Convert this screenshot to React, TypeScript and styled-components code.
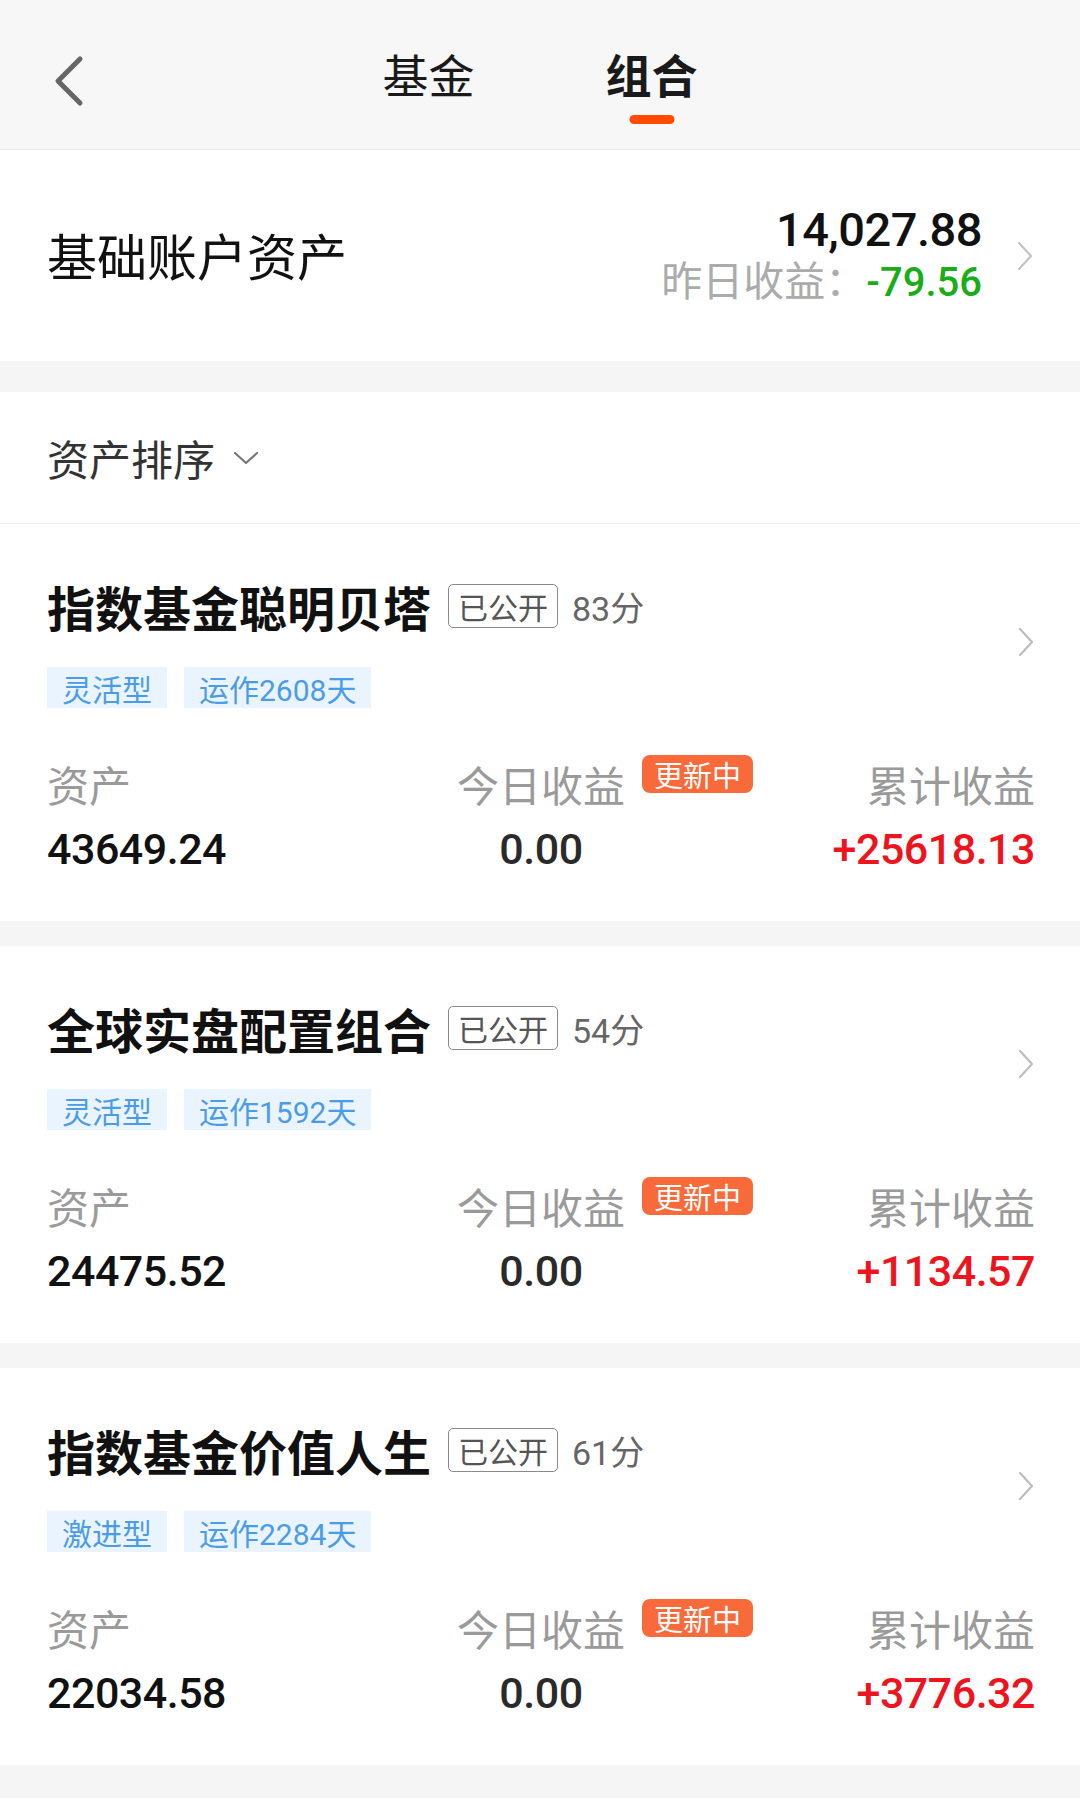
import React from 'react';
import styled, { createGlobalStyle } from 'styled-components';

const GlobalStyle = createGlobalStyle`
    html, body {
        margin: 0;
        padding: 0;
        background: #f5f5f5;
    }
    body {
        font-family: Roboto, "Noto Sans CJK SC", sans-serif;
        color: #111;
    }
`

const Page = styled.div`
    width: 1080px;
    min-height: 1798px;
    background: #f5f5f5;
`

const Header = styled.div`
    height: 149px;
    background: #f7f7f7;
    border-bottom: 1px solid #ebebeb;
    position: relative;
    display: flex;
    align-items: center;
    justify-content: center;
`

const BackButton = styled.div`
    position: absolute;
    left: 50px;
    top: 55px;
    width: 36px;
    height: 52px;
`

const Tabs = styled.div`
    display: flex;
    gap: 131px;
    margin-top: -4px;
`

const Tab = styled.div<{ $active?: boolean }>`
    position: relative;
    font-family: "Noto Sans CJK SC", sans-serif;
    font-size: 46px;
    line-height: 60px;
    font-weight: ${p => (p.$active ? 600 : 400)};
    color: #1a1a1a;

    &::after {
        content: '';
        display: ${p => (p.$active ? 'block' : 'none')};
        position: absolute;
        left: 50%;
        transform: translateX(-50%);
        top: 72px;
        width: 45px;
        height: 9px;
        border-radius: 5px;
        background: #ff4a00;
    }
`

const AccountCard = styled.div`
    height: 211px;
    background: #fff;
    display: flex;
    align-items: center;
    padding: 0 46px 0 47px;
`

const AccountLabel = styled.div`
    flex: 1;
    font-family: "Noto Sans CJK SC", sans-serif;
    font-size: 50px;
    color: #111;
    margin-top: -4px;
`

const AccountValues = styled.div`
    display: flex;
    flex-direction: column;
    align-items: flex-end;
`

const TotalValue = styled.div`
    font-family: Roboto, sans-serif;
    font-size: 47px;
    font-weight: 500;
    line-height: 49px;
    letter-spacing: -0.5px;
    color: #111;
`

const YesterdayRow = styled.div`
    font-family: "Noto Sans CJK SC", sans-serif;
    font-size: 41px;
    line-height: 49px;
    color: #ababab;
    display: flex;
    align-items: baseline;
`

const GreenNum = styled.span`
    font-family: Roboto, sans-serif;
    font-size: 40px;
    font-weight: 500;
    color: #1aad19;
`

const ChevronBox = styled.div<{ $ml: number }>`
    margin-left: ${p => p.$ml}px;
    width: 18px;
    height: 32px;
    flex-shrink: 0;
`

const Gap = styled.div<{ $h: number }>`
    height: ${p => p.$h}px;
    background: #f5f5f5;
`

const SortRow = styled.div`
    height: 131px;
    background: #fff;
    border-bottom: 1px solid #eeeeee;
    display: flex;
    align-items: center;
    padding-left: 47px;
    gap: 18px;
`

const SortText = styled.div`
    font-family: "Noto Sans CJK SC", sans-serif;
    font-size: 42px;
    color: #333;
`

const Card = styled.div`
    height: 397px;
    box-sizing: border-box;
    background: #fff;
    padding: 52px 45px 0 47px;
`

const Upper = styled.div`
    display: flex;
    align-items: center;
`

const UpperLeft = styled.div`
    flex: 1;
`

const TitleRow = styled.div`
    display: flex;
    align-items: center;
    height: 60px;
`

const Title = styled.div`
    font-family: "Noto Sans CJK SC", sans-serif;
    font-size: 48px;
    font-weight: 700;
    color: #111;
`

const PublicTag = styled.div`
    margin-left: 17px;
    height: 44px;
    width: 110px;
    box-sizing: border-box;
    border: 1.5px solid #8a8a8a;
    border-radius: 5px;
    display: flex;
    align-items: center;
    justify-content: center;
    font-family: "Noto Sans CJK SC", sans-serif;
    font-size: 30px;
    color: #555;
`

const Score = styled.div`
    margin-left: 14px;
    font-family: Roboto, "Noto Sans CJK SC", sans-serif;
    font-size: 34px;
    color: #666;
`

const TagRow = styled.div`
    display: flex;
    gap: 17px;
    margin-top: 31px;
`

const TypeTag = styled.div`
    height: 41px;
    padding: 0 15px;
    background: #eaf4fe;
    display: flex;
    align-items: center;
    font-family: Roboto, "Noto Sans CJK SC", sans-serif;
    font-size: 30px;
    color: #4b9ce8;
`

const Stats = styled.div`
    display: grid;
    grid-template-columns: 1fr 1fr 1fr;
    margin-top: 52px;
`

const StatCol = styled.div<{ $align: 'flex-start' | 'center' | 'flex-end' }>`
    display: flex;
    flex-direction: column;
    align-items: ${p => p.$align};
`

const StatLabel = styled.div`
    position: relative;
    font-family: "Noto Sans CJK SC", sans-serif;
    font-size: 42px;
    line-height: 48px;
    color: #9a9a9a;
`

const UpdatingBadge = styled.div`
    position: absolute;
    left: calc(100% + 17px);
    top: -5px;
    height: 38px;
    padding: 0 12px;
    border-radius: 8px;
    background: #f86a3a;
    color: #fff;
    font-size: 29px;
    line-height: 38px;
    white-space: nowrap;
`

const StatValue = styled.div<{ $color?: string }>`
    margin-top: 13px;
    font-family: Roboto, sans-serif;
    font-size: 43px;
    font-weight: 500;
    line-height: 56px;
    letter-spacing: -0.5px;
    color: ${p => p.$color || '#111'};
`

function Chevron({ color, width }: { color: string; width: number }) {
    return (
        <svg width="18" height="32" viewBox="0 0 18 32">
            <path d="M3 3 L15 16 L3 29" fill="none" stroke={color} strokeWidth={width} strokeLinecap="round" strokeLinejoin="round" />
        </svg>
    )
}

interface Portfolio {
    name: string
    score: number
    risk: string
    days: number
    asset: string
    today: string
    total: string
}

const portfolios: Portfolio[] = [
    { name: '指数基金聪明贝塔', score: 83, risk: '灵活型', days: 2608, asset: '43649.24', today: '0.00', total: '+25618.13' },
    { name: '全球实盘配置组合', score: 54, risk: '灵活型', days: 1592, asset: '24475.52', today: '0.00', total: '+1134.57' },
    { name: '指数基金价值人生', score: 61, risk: '激进型', days: 2284, asset: '22034.58', today: '0.00', total: '+3776.32' },
]

function PortfolioCard({ p }: { p: Portfolio }) {
    return (
        <Card>
            <Upper>
                <UpperLeft>
                    <TitleRow>
                        <Title>{p.name}</Title>
                        <PublicTag>已公开</PublicTag>
                        <Score>{p.score}分</Score>
                    </TitleRow>
                    <TagRow>
                        <TypeTag>{p.risk}</TypeTag>
                        <TypeTag>运作{p.days}天</TypeTag>
                    </TagRow>
                </UpperLeft>
                <ChevronBox $ml={0}>
                    <Chevron color="#bdbdbd" width={2.2} />
                </ChevronBox>
            </Upper>
            <Stats>
                <StatCol $align="flex-start">
                    <StatLabel>资产</StatLabel>
                    <StatValue>{p.asset}</StatValue>
                </StatCol>
                <StatCol $align="center">
                    <StatLabel>
                        今日收益
                        <UpdatingBadge>更新中</UpdatingBadge>
                    </StatLabel>
                    <StatValue $color="#2a2a2a">{p.today}</StatValue>
                </StatCol>
                <StatCol $align="flex-end">
                    <StatLabel>累计收益</StatLabel>
                    <StatValue $color="#ee141e">{p.total}</StatValue>
                </StatCol>
            </Stats>
        </Card>
    )
}

export default function App() {
    return (
        <Page>
            <GlobalStyle />
            <Header>
                <BackButton>
                    <svg width="36" height="52" viewBox="0 0 36 52">
                        <path d="M30 4 L8 26 L30 48" fill="none" stroke="#666" strokeWidth="5" strokeLinecap="round" strokeLinejoin="round" />
                    </svg>
                </BackButton>
                <Tabs>
                    <Tab>基金</Tab>
                    <Tab $active>组合</Tab>
                </Tabs>
            </Header>

            <AccountCard>
                <AccountLabel>基础账户资产</AccountLabel>
                <AccountValues>
                    <TotalValue>14,027.88</TotalValue>
                    <YesterdayRow>
                        昨日收益：<GreenNum>-79.56</GreenNum>
                    </YesterdayRow>
                </AccountValues>
                <ChevronBox $ml={34}>
                    <Chevron color="#c4c4c4" width={2.2} />
                </ChevronBox>
            </AccountCard>

            <Gap $h={31} />

            <SortRow>
                <SortText>资产排序</SortText>
                <svg width="26" height="16" viewBox="0 0 26 16">
                    <path d="M2 3 L13 13 L24 3" fill="none" stroke="#777" strokeWidth="2.2" strokeLinecap="round" strokeLinejoin="round" />
                </svg>
            </SortRow>

            {portfolios.map((p, i) => (
                <React.Fragment key={p.name}>
                    <PortfolioCard p={p} />
                    <Gap $h={i === portfolios.length - 1 ? 36 : 25} />
                </React.Fragment>
            ))}
        </Page>
    )
}
